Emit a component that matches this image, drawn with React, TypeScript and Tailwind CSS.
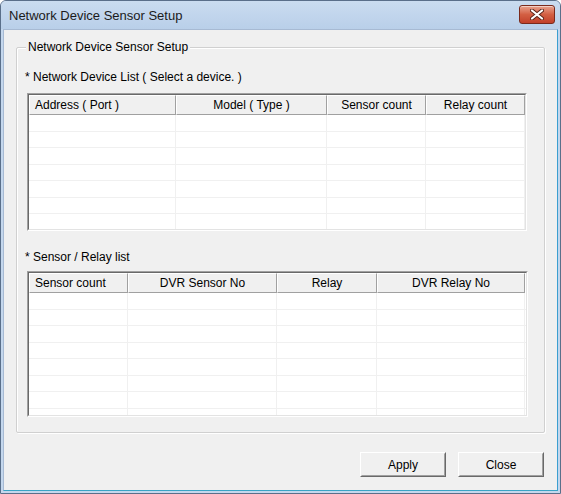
import React from "react";

const font = { fontFamily: '"Liberation Sans", Arial, sans-serif' };

type Col = { label: string; w: number; align: "left" | "center" };

function ListView({ cols, width, height, rows }: { cols: Col[]; width: number; height: number; rows: number }) {
  return (
    <div
      className="border border-t-[#a0a0a0] border-l-[#a0a0a0] border-r-white border-b-white"
      style={{ width, height }}
    >
      <div className="h-full w-full border border-t-[#696969] border-l-[#696969] border-r-[#e3e3e3] border-b-[#e3e3e3] bg-white overflow-hidden flex flex-col">
        <div className="flex h-[20px] shrink-0">
          {cols.map((c, i) => (
            <div
              key={i}
              className={`h-full border border-t-white border-l-white border-r-[#a0a0a0] border-b-[#a0a0a0] bg-[#f0f0f0] flex items-center text-[12px] leading-none text-black ${
                c.align === "left" ? "justify-start pl-[5px]" : "justify-center"
              }`}
              style={{ width: c.w }}
            >
              {c.label}
            </div>
          ))}
        </div>
        <div className="flex-1 overflow-hidden">
          {Array.from({ length: rows }).map((_, r) => (
            <div key={r} className="flex h-[16.5px] border-b border-[#f0f0f0]">
              {cols.map((c, i) => (
                <div key={i} className="h-full border-r border-[#f0f0f0]" style={{ width: c.w }} />
              ))}
            </div>
          ))}
        </div>
      </div>
    </div>
  );
}

function Button({ label }: { label: string }) {
  return (
    <div className="w-[86px] h-[25px] border border-t-white border-l-white border-r-[#696969] border-b-[#696969]">
      <div className="w-full h-full border border-t-[#f0f0f0] border-l-[#f0f0f0] border-r-[#a0a0a0] border-b-[#a0a0a0] bg-[#f0f0f0] flex items-center justify-center text-[12px] text-black">
        {label}
      </div>
    </div>
  );
}

export default function App() {
  const cols1: Col[] = [
    { label: "Address ( Port )", w: 147, align: "left" },
    { label: "Model ( Type )", w: 151, align: "center" },
    { label: "Sensor count", w: 99, align: "center" },
    { label: "Relay count", w: 99, align: "center" },
  ];
  const cols2: Col[] = [
    { label: "Sensor count", w: 99, align: "left" },
    { label: "DVR Sensor No", w: 149, align: "center" },
    { label: "Relay", w: 100, align: "center" },
    { label: "DVR Relay No", w: 148, align: "center" },
  ];
  return (
    <div style={font} className="w-[561px] h-[494px] relative overflow-hidden">
      <div className="w-full h-full flex flex-col rounded-t-[6px] border border-[#5a6f8a] bg-[#c4d7ed] overflow-hidden">
        {/* title bar */}
        <div className="h-[28px] shrink-0 flex items-center justify-between bg-gradient-to-b from-[#cadcf0] to-[#b9cfe9] pl-[8px] pr-[5px]">
          <div className="text-[13px] text-[#1b1b1b] leading-none">Network Device Sensor Setup</div>
          <div className="relative w-[36px] h-[19px] mb-[2px] rounded-[3px] border border-[#7a2a1c] bg-gradient-to-b from-[#e7a18d] via-[#d35f43] to-[#c2402a] flex items-center justify-center shadow-[inset_0_1px_0_rgba(255,255,255,0.5)]">
            <svg width="14" height="11" viewBox="0 0 14 11">
              <path d="M2 1.5 L12 9.5 M12 1.5 L2 9.5" stroke="#5a2419" strokeWidth="4" strokeLinecap="round" />
              <path d="M2 1.5 L12 9.5 M12 1.5 L2 9.5" stroke="#ffffff" strokeWidth="2.2" strokeLinecap="round" />
            </svg>
          </div>
        </div>
        {/* client */}
        <div className="flex-1 flex px-[2px] pb-[2px]">
          <div className="flex-1 flex flex-col bg-[#f0f0f0] border border-[#a7bad3] border-r-[#3c9fd0] border-b-[#3aa3c4]">
            {/* group box */}
            <div className="relative mt-[17px] mx-[12px] h-[386px] rounded-[2px] border border-[#d0d0d0] shadow-[inset_1px_1px_0_#ffffff,1px_1px_0_#ffffff] flex flex-col pl-[10px]">
              <div className="absolute left-[9px] top-[-8px] px-[2px] bg-[#f0f0f0] text-[12px] leading-[14px] text-black">
                Network Device Sensor Setup
              </div>
              <div className="mt-[22px] -ml-[2px] text-[12px] leading-[14px] text-black">
                * Network Device List ( Select a device. )
              </div>
              <div className="mt-[9px]">
                <ListView cols={cols1} width={500} height={138} rows={7} />
              </div>
              <div className="mt-[19px] -ml-[2px] text-[12px] leading-[14px] text-black">* Sensor / Relay list</div>
              <div className="mt-[7px]">
                <ListView cols={cols2} width={501} height={146} rows={8} />
              </div>
            </div>
            {/* buttons */}
            <div className="mt-[19px] flex justify-end gap-[12px] pr-[13px]">
              <Button label="Apply" />
              <Button label="Close" />
            </div>
          </div>
        </div>
      </div>
    </div>
  );
}
